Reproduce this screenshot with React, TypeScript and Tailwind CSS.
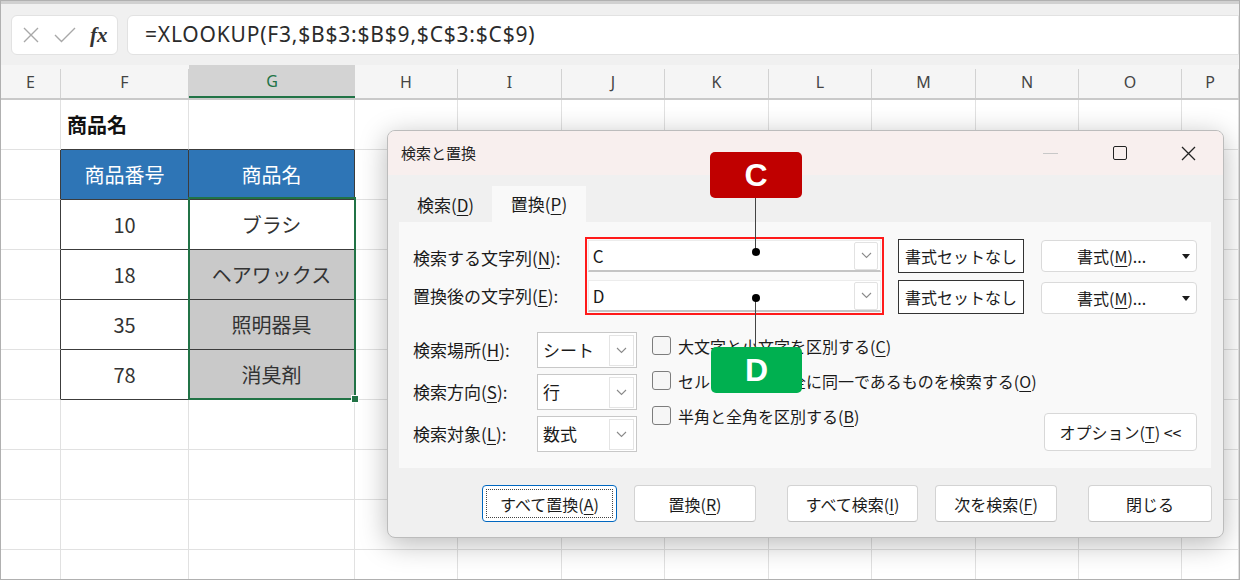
import React from 'react';

const cols = [
  { l: 'E', w: 'w-[60px]' },
  { l: 'F', w: 'w-[128px]' },
  { l: 'G', w: 'w-[166px]' },
  { l: 'H', w: 'w-[103px]' },
  { l: 'I', w: 'w-[104px]' },
  { l: 'J', w: 'w-[103px]' },
  { l: 'K', w: 'w-[104px]' },
  { l: 'L', w: 'w-[103px]' },
  { l: 'M', w: 'w-[104px]' },
  { l: 'N', w: 'w-[103px]' },
  { l: 'O', w: 'w-[103px]' },
  { l: 'P', w: 'flex-1' },
];

const items = [
  { no: '10', name: 'ブラシ' },
  { no: '18', name: 'ヘアワックス' },
  { no: '35', name: '照明器具' },
  { no: '78', name: '消臭剤' },
];

const Chevron = () => (
  <svg width="11" height="7" viewBox="0 0 11 7" fill="none">
    <path d="M1 1l4.5 4.5L10 1" stroke="#8a8a8a" strokeWidth="1.1" />
  </svg>
);

const Key = ({ pre, k, post = '' }: { pre: string; k: string; post?: string }) => (
  <span>
    {pre}(<span className="underline underline-offset-[3px]">{k}</span>){post}
  </span>
);

function cellClass(r: number, c: number) {
  let cls = 'h-full border-r border-b border-[#e1e1e1] flex items-center justify-center';
  if (r === 0 && (c === 1 || c === 2)) cls = 'h-full border-r border-[#e1e1e1] border-b border-b-[#3c3c3c] flex items-center';
  if (r >= 1 && r <= 5 && c === 0) cls = 'h-full border-b border-[#e1e1e1] border-r border-r-[#3c3c3c]';
  if (r >= 1 && r <= 5 && (c === 1 || c === 2)) {
    cls = 'h-full border-r border-b border-[#3c3c3c] flex items-center justify-center text-[20px]';
    if (r === 1) cls += ' bg-[#2e75b6] text-white';
    else if (c === 2 && r > 2) cls += ' bg-[#c9c9c9] text-[#333]';
    else cls += ' bg-white text-[#333]';
  }
  return cls;
}

function cellText(r: number, c: number) {
  if (r === 0 && c === 1) return <span className="pl-[6px] text-[20px] font-bold text-[#111]">商品名</span>;
  if (r === 1 && c === 1) return '商品番号';
  if (r === 1 && c === 2) return '商品名';
  if (r >= 2 && r <= 5 && c === 1) return items[r - 2].no;
  if (r >= 2 && r <= 5 && c === 2) return items[r - 2].name;
  return null;
}

const Combo = ({ value }: { value: string }) => (
  <div className="h-[32px] w-full bg-white border border-[#ececec] border-b-2 border-b-[#c4c4c4] flex items-center pl-[4px] pr-[2px]">
    <span className="flex-1 text-[17px] text-[#1a1a1a]">{value}</span>
    <div className="w-[24px] h-[28px] border border-[#e2e2e2] rounded-[2px] flex items-center justify-center">
      <Chevron />
    </div>
  </div>
);

const Select = ({ value }: { value: string }) => (
  <div className="h-[36px] w-[100px] bg-white border border-[#c8c8c8] flex items-center pl-[5px] pr-[2px]">
    <span className="flex-1 text-[17px] text-[#1a1a1a]">{value}</span>
    <div className="w-[25px] h-[31px] border border-[#e4e4e4] flex items-center justify-center">
      <Chevron />
    </div>
  </div>
);

const Check = ({ children }: { children: React.ReactNode }) => (
  <div className="h-[35px] flex items-center">
    <div className="w-[19px] h-[19px] rounded-[3px] border border-[#7d7d7d] bg-[#f6f6f6]" />
    <span className="ml-[7px] text-[16px]">{children}</span>
  </div>
);

const Btn = ({ children, cls }: { children: React.ReactNode; cls: string }) => (
  <div className={`h-[37px] bg-white border border-[#d3d3d3] border-b-[#c2c2c2] rounded-[4px] flex items-center justify-center text-[16px] ${cls}`}>
    {children}
  </div>
);

export default function App() {
  return (
    <div className="relative w-[1240px] h-[580px] overflow-hidden border border-[#b0b0b0] bg-white font-['Noto_Sans_CJK_JP','Noto_Sans',sans-serif] text-[#1b1b1b]">
      {/* formula bar */}
      <div className="h-[64px] bg-[#f0f0f0] border-t-[3px] border-[#d0d0d0] flex items-start pt-[11px] pl-[10px] gap-[9px]">
        <div className="w-[107px] h-[40px] bg-white rounded-[6px] border border-[#e2e2e2] flex items-center pl-[10px] gap-[14px]">
          <svg width="18" height="18" viewBox="0 0 18 18">
            <path d="M2 2l14 14M16 2L2 16" stroke="#a8a8a8" strokeWidth="1.4" />
          </svg>
          <svg width="22" height="16" viewBox="0 0 22 16" fill="none">
            <path d="M1 8l6.5 6.5L21 1" stroke="#a8a8a8" strokeWidth="1.4" />
          </svg>
          <span className="font-['Liberation_Serif',serif] italic font-bold text-[21px] text-[#333] leading-none">fx</span>
        </div>
        <div className="flex-1 h-[40px] bg-white rounded-l-[6px] border border-[#e2e2e2] flex items-center pl-[17px]">
          <span className="font-['Noto_Sans',sans-serif] text-[21px] tracking-[0.8px] text-[#2b2b2b]">=XLOOKUP(F3,$B$3:$B$9,$C$3:$C$9)</span>
        </div>
      </div>

      {/* column headers */}
      <div className="h-[35px] flex bg-[#f5f5f5] border-b-2 border-[#c9c9c9]">
        {cols.map((c) =>
          c.l === 'G' ? (
            <div key={c.l} className={`${c.w} h-full bg-[#d3d3d3] border-b-2 border-[#217346] flex items-center justify-center text-[16px] text-[#217346] font-['Noto_Sans',sans-serif]`}>
              {c.l}
            </div>
          ) : (
            <div key={c.l} className={`${c.w} h-full flex items-end`}>
              <div className="flex-1 h-[29px] border-r border-[#d2d2d2] flex items-center justify-center text-[16px] text-[#444] font-['Noto_Sans',sans-serif] -mt-[3px] pb-[3px]">
                {c.l}
              </div>
            </div>
          )
        )}
      </div>

      {/* grid */}
      <div className="relative">
        {Array.from({ length: 10 }).map((_, r) => (
          <div key={r} className="h-[50px] flex">
            {cols.map((c, ci) => (
              <div key={c.l} className={`${c.w} ${cellClass(r, ci)}`}>
                {cellText(r, ci)}
              </div>
            ))}
          </div>
        ))}
        <div className="absolute left-[187px] top-[97px] w-[168px] h-[203px] border-2 border-[#217346]">
          <div className="absolute -right-[5px] -bottom-[5px] w-[8px] h-[8px] bg-[#217346] border border-white" />
        </div>
      </div>

      {/* dialog */}
      <div className="absolute left-[386px] top-[129px] w-[837px] h-[408px] rounded-[8px] border border-[#bcbcbc] bg-[#f0f0f0] shadow-[0_6px_28px_rgba(0,0,0,0.28)] flex flex-col overflow-hidden">
        <div className="h-[44px] bg-[#f8efee] flex items-center pl-[13px] shrink-0">
          <span className="text-[15px] text-[#222]">検索と置換</span>
          <div className="ml-auto flex h-full">
            <div className="w-[69px] flex items-center justify-center">
              <div className="w-[15px] h-px bg-[#c8c8c8]" />
            </div>
            <div className="w-[69px] flex items-center justify-center">
              <div className="w-[14px] h-[14px] border-[1.5px] border-[#222] rounded-[2px]" />
            </div>
            <div className="w-[69px] flex items-center justify-center">
              <svg width="15" height="15" viewBox="0 0 15 15">
                <path d="M1 1l13 13M14 1L1 14" stroke="#222" strokeWidth="1.3" />
              </svg>
            </div>
          </div>
        </div>

        <div className="px-[11px] pt-[12px]">
          {/* tabs */}
          <div className="flex h-[35px] items-end">
            <div className="w-[93px] h-[35px] flex items-center justify-center text-[17px]">
              <Key pre="検索" k="D" />
            </div>
            <div className="w-[94px] h-[36px] bg-[#f9f9f9] flex items-center justify-center text-[17px]">
              <Key pre="置換" k="P" />
            </div>
          </div>

          {/* panel */}
          <div className="w-[812px] h-[246px] bg-[#f9f9f9] pl-[14px] pr-[14px] pt-[15px]">
            <div className="flex">
              <div className="w-[172px] flex flex-col text-[17px]">
                <div className="h-[39px] flex items-center pt-[2px]">
                  <Key pre="検索する文字列" k="N" post=":" />
                </div>
                <div className="h-[39px] flex items-center">
                  <Key pre="置換後の文字列" k="E" post=":" />
                </div>
              </div>
              <div className="w-[300px] border-2 border-[#ff1a1a] p-px flex flex-col gap-[8px]">
                <Combo value="C" />
                <Combo value="D" />
              </div>
              <div className="ml-[14px] pt-[2px] flex flex-col gap-[7px]">
                <div className="w-[126px] h-[34px] bg-white border border-[#333] flex items-center justify-center text-[16px]">書式セットなし</div>
                <div className="w-[126px] h-[34px] bg-white border border-[#333] flex items-center justify-center text-[16px]">書式セットなし</div>
              </div>
              <div className="ml-[17px] pt-[3px] flex flex-col gap-[10px]">
                {[0, 1].map((i) => (
                  <div key={i} className="relative w-[156px] h-[32px] bg-white border border-[#dadada] rounded-[4px] flex items-center pl-[35px] text-[16px]">
                    <Key pre="書式" k="M" post="..." />
                    <svg className="absolute right-[6px] top-[13px]" width="8" height="5" viewBox="0 0 8 5">
                      <path d="M0 0h8L4 5z" fill="#1b1b1b" />
                    </svg>
                  </div>
                ))}
              </div>
            </div>

            <div className="flex items-end mt-[17px]">
              <div className="w-[124px] flex flex-col gap-[6px] text-[17px]">
                <div className="h-[36px] flex items-center"><Key pre="検索場所" k="H" post=":" /></div>
                <div className="h-[36px] flex items-center"><Key pre="検索方向" k="S" post=":" /></div>
                <div className="h-[36px] flex items-center"><Key pre="検索対象" k="L" post=":" /></div>
              </div>
              <div className="flex flex-col gap-[6px]">
                <Select value="シート" />
                <Select value="行" />
                <Select value="数式" />
              </div>
              <div className="flex-1 self-start -mt-[4px] ml-[15px] flex flex-col">
                <Check><Key pre="大文字と小文字を区別する" k="C" /></Check>
                <Check><Key pre="セルの内容が完全に同一であるものを検索する" k="O" /></Check>
                <Check><Key pre="半角と全角を区別する" k="B" /></Check>
              </div>
              <div className="w-[153px] h-[38px] mb-px bg-white border border-[#d8d8d8] rounded-[4px] flex items-center justify-center text-[16px]">
                <Key pre="オプション" k="T" post=" <<" />
              </div>
            </div>
          </div>
        </div>

        {/* bottom buttons */}
        <div className="flex pl-[94px] mt-[17px]">
          <div className="w-[135px] h-[37px] bg-white border border-[#0067c0] rounded-[4px] p-[3px]">
            <div className="w-full h-full border border-dotted border-[#444] flex items-center justify-center text-[16px]">
              <Key pre="すべて置換" k="A" />
            </div>
          </div>
          <Btn cls="w-[122px] ml-[17px]"><Key pre="置換" k="R" /></Btn>
          <Btn cls="w-[131px] ml-[31px]"><Key pre="すべて検索" k="I" /></Btn>
          <Btn cls="w-[122px] ml-[17px]"><Key pre="次を検索" k="F" /></Btn>
          <Btn cls="w-[124px] ml-[31px]">閉じる</Btn>
        </div>
      </div>

      {/* callouts */}
      <div className="absolute left-[754px] top-[196px] w-px h-[55px] bg-[#444]" />
      <div className="absolute left-[751px] top-[247px] w-[8px] h-[8px] rounded-full bg-black" />
      <div className="absolute left-[754px] top-[297px] w-px h-[50px] bg-[#444]" />
      <div className="absolute left-[751px] top-[293px] w-[8px] h-[8px] rounded-full bg-black" />
      <div className="absolute left-[709px] top-[151px] w-[92px] h-[46px] rounded-[5px] bg-[#c00000] flex items-center justify-center text-white text-[32px] font-['Liberation_Sans',sans-serif] font-bold">
        C
      </div>
      <div className="absolute left-[710px] top-[346px] w-[91px] h-[46px] rounded-[5px] bg-[#00b050] flex items-center justify-center text-white text-[32px] font-['Liberation_Sans',sans-serif] font-bold">
        D
      </div>
    </div>
  );
}
